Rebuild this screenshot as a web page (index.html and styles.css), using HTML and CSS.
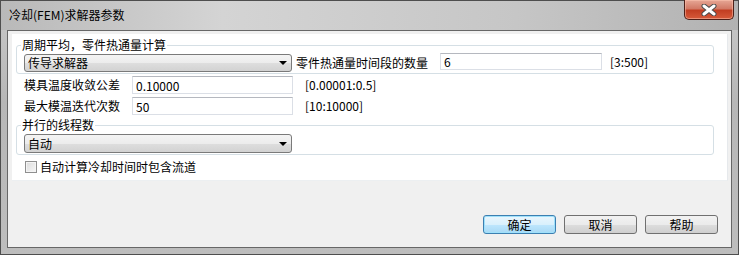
FILE: index.html
```html
<!DOCTYPE html>
<html lang="zh-CN">

<head>
    <meta charset="UTF-8">
    <title>冷却(FEM)求解器参数</title>
    <link rel="stylesheet" href="styles.css">
</head>

<body>
    <div class="window">
        <div class="titlebar">
            <span class="title">冷却(FEM)求解器参数</span>
            <div class="close">
                <svg width="16" height="12" viewBox="0 0 16 12">
                    <path d="M3 2 L13 10 M13 2 L3 10" stroke="#4a4a4a" stroke-width="5" stroke-linecap="round" />
                    <path d="M3 2 L13 10 M13 2 L3 10" stroke="#ffffff" stroke-width="3" stroke-linecap="round" />
                </svg>
            </div>
        </div>

        <div class="client">
            <div class="panel">
                <fieldset class="group first">
                    <legend>周期平均，零件热通量计算</legend>
                    <div class="row">
                        <div class="combo">传导求解器<span class="arrow"></span></div>
                        <span class="label count">零件热通量时间段的数量</span>
                        <input class="field short" type="text" value="6">
                        <span class="range near">[3:500]</span>
                    </div>
                </fieldset>

                <div class="row plain">
                    <span class="label">模具温度收敛公差</span>
                    <input class="field" type="text" value="0.10000">
                    <span class="range">[0.00001:0.5]</span>
                </div>
                <div class="row plain second">
                    <span class="label">最大模温迭代次数</span>
                    <input class="field" type="text" value="50">
                    <span class="range">[10:10000]</span>
                </div>

                <fieldset class="group threads">
                    <legend>并行的线程数</legend>
                    <div class="row">
                        <div class="combo tall">自动<span class="arrow"></span></div>
                    </div>
                </fieldset>

                <label class="check">
                    <span class="box"></span>
                    <span>自动计算冷却时间时包含流道</span>
                </label>
            </div>

            <div class="buttons">
                <button class="btn default">确定</button>
                <button class="btn">取消</button>
                <button class="btn">帮助</button>
            </div>
        </div>
    </div>
</body>

</html>
```

FILE: styles.css
```css
* {
    box-sizing: border-box;
}

body {
    margin: 0;
    background-color: #ffffff;
    font-family: "Noto Sans CJK SC", "Liberation Sans", sans-serif;
    font-size: 12px;
    color: #000000;
}

.window {
    width: 739px;
    height: 255px;
    border: 1px solid #4e4e4e;
    background: linear-gradient(to bottom, #c9c9c9, #b7b7b7 40%, #bdbdbd);
    display: flex;
    flex-direction: column;
}

.titlebar {
    height: 29px;
    display: flex;
    justify-content: space-between;
    align-items: flex-start;
    background: linear-gradient(to right, #b9b9b9, #d4d4d4 30%, #c6c6c6 70%, #b2b2b2);
}

.title {
    margin: 6px 0 0 8px;
    line-height: 16px;
    color: #000000;
}

.close {
    width: 50px;
    height: 20px;
    margin: -1px 4px 0 0;
    border: 1px solid #4d2019;
    border-top: none;
    border-radius: 0 0 5px 5px;
    background: linear-gradient(to bottom, #e6a795, #d27a66 45%, #c23e22 55%, #d65a3a);
    display: flex;
    align-items: center;
    justify-content: center;
    box-shadow: inset 0 0 0 1px rgba(255, 200, 180, 0.5);
}

.client {
    flex: 1;
    margin: 0 6px 6px 6px;
    border: 1px solid #676767;
    background-color: #f0f0f0;
    display: flex;
    flex-direction: column;
}

.panel {
    margin: 3px 3px 0 4px;
    padding: 4px 0 6px 4px;
    background-color: #ffffff;
    border-right: 1px solid #e6e9ec;
    border-bottom: 1px solid #eceff1;
}

.group {
    width: 698px;
    margin: 0;
    padding: 2px 7px 1px 7px;
    border: 1px solid #d5dfe5;
    border-radius: 3px;
}

.group legend {
    margin-left: -3px;
    padding: 0 1px;
    line-height: 14px;
}

.row {
    display: flex;
    align-items: flex-start;
}

.combo {
    width: 268px;
    height: 18px;
    padding-left: 3px;
    line-height: 16px;
    border: 1px solid #7a7a7a;
    border-radius: 3px;
    background: linear-gradient(to bottom, #f4f4f4, #ececec 50%, #dedede 51%, #d2d2d2);
    display: flex;
    justify-content: space-between;
    align-items: center;
}

.combo.tall {
    height: 19px;
}

.arrow {
    width: 0;
    height: 0;
    margin-right: 4px;
    border-left: 4px solid transparent;
    border-right: 4px solid transparent;
    border-top: 4px solid #000000;
}

.label {
    width: 108px;
    line-height: 18px;
}

.label.count {
    width: 132px;
    margin-left: 4px;
}

.field {
    width: 161px;
    height: 18px;
    margin: 0 0 0 0;
    padding: 0 3px;
    font-family: "Noto Sans CJK SC", "Liberation Sans", sans-serif;
    font-size: 12px;
    color: #000000;
    border: 1px solid #dbdfe6;
    border-top-color: #b5b8bf;
    background-color: #ffffff;
    outline: none;
}

.field.short {
    width: 162px;
    height: 17px;
    margin: -1px 0 0 12px;
}

.range {
    margin-left: 12px;
    line-height: 18px;
}

.range.near {
    margin-left: 8px;
    margin-top: -1px;
}

.plain {
    margin-top: 2px;
    padding-left: 8px;
}

.plain.second {
    margin-top: 3px;
}

.threads {
    margin-top: 3px;
}

.check {
    display: flex;
    align-items: center;
    gap: 3px;
    margin: 5px 0 0 9px;
    line-height: 14px;
}

.check .box {
    width: 12px;
    height: 12px;
    border: 1px solid #8f8f8f;
    background: linear-gradient(135deg, #dcdcdc, #f6f6f6);
    box-shadow: inset 0 0 0 1px #f4f4f4;
}

.buttons {
    margin-top: auto;
    padding: 0 13px 13px 0;
    display: flex;
    justify-content: flex-end;
    gap: 8px;
}

.btn {
    width: 73px;
    height: 19px;
    padding: 0;
    font-family: "Noto Sans CJK SC", "Liberation Sans", sans-serif;
    font-size: 12px;
    line-height: 15px;
    color: #000000;
    border: 1px solid #707070;
    border-radius: 3px;
    background: linear-gradient(to bottom, #f2f2f2, #ebebeb 50%, #dddddd 51%, #cfcfcf);
}

.btn.default {
    border-color: #3c7fb1;
    background: linear-gradient(to bottom, #eaf6fd, #d9f0fc 50%, #bee6fd 51%, #a7d9f5);
    box-shadow: inset 0 0 0 1px #9fe1fb;
}
```
